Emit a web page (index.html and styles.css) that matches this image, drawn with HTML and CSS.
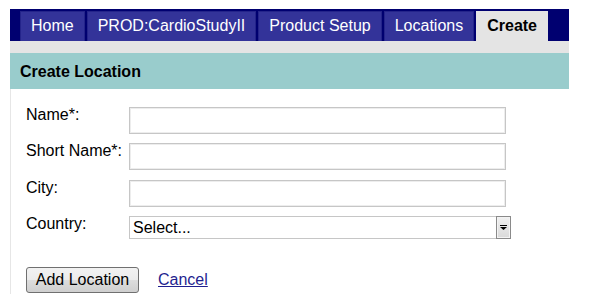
FILE: index.html
```html
<!DOCTYPE html>
<html lang="en">
<head>
<meta charset="utf-8">
<title>Create Location</title>
<link rel="stylesheet" href="styles.css">
</head>
<body>
<div class="page">
  <nav class="tabs">
    <a class="tab" href="#">Home</a>
    <a class="tab" href="#">PROD:CardioStudyII</a>
    <a class="tab" href="#">Product Setup</a>
    <a class="tab" href="#">Locations</a>
    <span class="tab tab-active">Create</span>
  </nav>
  <div class="strip"></div>
  <h1 class="section-title">Create Location</h1>
  <div class="content">
    <form class="form">
      <div class="fields">
        <label class="field-label" for="name">Name*:</label>
        <input class="text-input" id="name" type="text">
        <label class="field-label" for="short">Short Name*:</label>
        <input class="text-input" id="short" type="text">
        <label class="field-label" for="city">City:</label>
        <input class="text-input" id="city" type="text">
        <label class="field-label" for="country">Country:</label>
        <div class="select">
          <span class="select-text" id="country">Select...</span>
          <span class="select-btn">
            <svg width="7" height="5" viewBox="0 0 7 5"><rect x="0" y="0" width="7" height="1" fill="#000"/><path d="M0 2 H7 L3.5 5 Z" fill="#000"/></svg>
          </span>
        </div>
      </div>
      <div class="actions">
        <button class="btn" type="button">Add Location</button>
        <a class="link" href="#">Cancel</a>
      </div>
    </form>
  </div>
</div>
</body>
</html>
```

FILE: styles.css
```css
* { box-sizing: border-box; }
html, body { margin: 0; padding: 0; background: #fff; }
body {
  font-family: "Liberation Sans", Arial, sans-serif;
  font-size: 16px;
  color: #000;
}
.page {
  width: 569px;
  padding: 9px 0 0 10px;
}
.tabs {
  display: flex;
  gap: 2px;
  background: #000070;
  padding: 2px 0 0 10px;
  height: 32px;
}
.tab {
  display: block;
  height: 30px;
  line-height: 28px;
  padding: 0 10px;
  border: 1px solid #24248a;
  border-bottom: none;
  background: #333399;
  color: #fff;
  text-decoration: none;
  white-space: nowrap;
}
.tab-active {
  background: #e4e4e4;
  border-color: #e4e4e4;
  color: #000;
  font-weight: bold;
}
.strip {
  height: 12px;
  background: #e4e4e4;
}
.section-title {
  margin: 0;
  height: 36px;
  padding: 10px 0 0 10px;
  line-height: 18px;
  font-size: 16px;
  font-weight: bold;
  background: #99cccc;
  color: #000;
}
.content {
  border-left: 1px solid #e6e6e6;
  padding: 18px 0 1px 15px;
}
.fields {
  display: grid;
  grid-template-columns: 103px auto;
  row-gap: 9.4px;
  align-items: start;
}
.field-label {
  margin-top: -1px;
  line-height: 18px;
  white-space: nowrap;
}
.text-input {
  width: 377px;
  height: 27px;
  border: 1px solid #c6c6c6;
  box-shadow: inset 0 0 0 1px #ededed;
  margin: 0;
  padding: 0 3px;
  font: inherit;
  background: #fff;
}
.select {
  display: flex;
  width: 382px;
  height: 23px;
  border: 1px solid #c6c6c6;
  background: #fff;
}
.select-text {
  flex: 1;
  padding-left: 3px;
  line-height: 21px;
}
.select-btn {
  width: 15px;
  height: 23px;
  margin: -1px -1px -1px 0;
  border: 1px solid #8a8a8a;
  box-shadow: inset 0 0 0 1px #f3f3f3;
  background: linear-gradient(#f1f1f1, #d9d9d9);
  display: flex;
  align-items: center;
  justify-content: center;
}
.actions {
  display: flex;
  align-items: center;
  gap: 19px;
  margin-top: 28px;
}
.btn {
  height: 26px;
  width: 113px;
  padding: 0;
  border: 1px solid #707070;
  border-radius: 3px;
  background: linear-gradient(#f2f2f2 0%, #ebebeb 50%, #dddddd 50%, #cfcfcf 100%);
  font: inherit;
  color: #000;
}
.link {
  color: #1f1f8f;
  text-decoration: underline;
}
```
